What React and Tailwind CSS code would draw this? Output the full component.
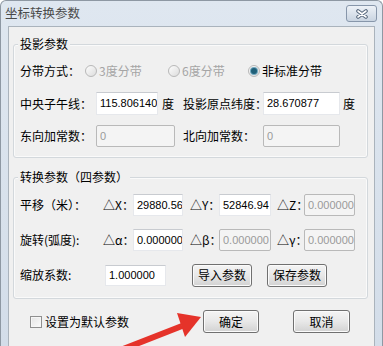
import React from 'react';

const cjk = { fontFamily: '"Noto Sans CJK SC", "Noto Sans", sans-serif' };

const Field = ({ value, w, disabled, h = 'h-[22px]' }) => (
  <div
    className={`${w} ${h} shrink-0 flex items-center px-[3px] overflow-hidden whitespace-nowrap text-[11px] font-['Liberation_Sans',sans-serif] ${
      disabled
        ? 'bg-[#f4f4f4] border border-[#b9b9b9] rounded-[2px] text-[#9a9a9a]'
        : 'bg-white border border-[#e6e8ec] border-t-[#c8cbd0] text-black'
    }`}
  >
    {value}
  </div>
);

const Radio = ({ checked, disabled, label, w }) => (
  <div className={`${w} shrink-0 flex items-center gap-[2px]`}>
    <div className="w-[12px] h-[12px] rounded-full border border-[#b8b8b8] bg-linear-to-br from-[#fdfdfd] to-[#dcdcdc] flex items-center justify-center">
      {checked && <div className="w-[6px] h-[6px] rounded-full bg-[#1f5f78] shadow-[0_0_0_1px_#6fa6bd]" />}
    </div>
    <span className={disabled ? 'text-[#a5a5a5]' : 'text-black'}>{label}</span>
  </div>
);

const Button = ({ children, w }) => (
  <div className={`${w} h-[23px] shrink-0 rounded-[3px] border border-[#707070] bg-linear-to-b from-[#f4f4f4] via-[#e8e8e8] to-[#d2d2d2] shadow-[inset_0_0_0_1px_#fbfbfb] flex items-center justify-center text-[12px] text-black`}>
    {children}
  </div>
);

const Delta = ({ children, w = 'w-[30px]' }) => (
  <span className={`${w} shrink-0 whitespace-nowrap`}>{children}</span>
);

const Group = ({ title, h, mt, children }) => (
  <div className={`relative w-[355px] ${h} ${mt} border border-[#d3d8dc] rounded-[3px] shadow-[inset_0_0_0_1px_#fafafa]`}>
    <span className="absolute left-[4px] top-[-9px] px-[2px] leading-[16px] bg-[#f0f0f0] text-[12px]">{title}</span>
    {children}
  </div>
);

export default function App() {
  return (
    <div
      className="relative w-[383px] h-[346px] overflow-hidden bg-linear-to-b from-[#dfe7f0] to-[#d3dde9] border-x border-t border-[#8e98a3] rounded-t-[6px] text-[12px] text-black"
      style={cjk}
    >
      {/* title bar */}
      <div className="h-[25px] flex items-center justify-between pl-[4px] pr-[5px]">
        <span className="text-[12.5px] text-[#4a4a4a]">坐标转换参数</span>
        <div className="w-[31px] h-[17px] rounded-[3px] border border-[#8796aa] bg-linear-to-b from-[#eef2f7] to-[#c9d4e1] flex items-center justify-center">
          <svg width="14" height="10" viewBox="0 0 14 10">
            <path d="M3 2 L11 8 M11 2 L3 8" stroke="#56677c" strokeWidth="3.6" strokeLinecap="round" />
            <path d="M3 2 L11 8 M11 2 L3 8" stroke="#ffffff" strokeWidth="1.6" strokeLinecap="round" />
          </svg>
        </div>
      </div>

      {/* client area */}
      <div className="ml-[7px] w-[367px] h-[321px] bg-[#f0f0f0] border-x border-t border-[#aab3bc] pl-[4px]">
        <Group title="投影参数" h="h-[114px]" mt="mt-[17px]">
          <div className="pt-[15px] pl-[6px] flex flex-col">
            <div className="h-[22px] flex items-center">
              <span className="w-[65px] shrink-0 whitespace-nowrap">分带方式：</span>
              <Radio w="w-[83px]" disabled label="3度分带" />
              <Radio w="w-[80px]" disabled label="6度分带" />
              <Radio w="w-[90px]" checked label="非标准分带" />
            </div>
            <div className="mt-[10px] h-[23px] flex items-center">
              <div className="w-[163px] shrink-0 flex items-center">
                <span className="w-[76px] shrink-0 whitespace-nowrap">中央子午线：</span>
                <Field w="w-[62px]" h="h-[23px]" value="115.806140" />
                <span className="ml-[4px]">度</span>
              </div>
              <span className="w-[80px] shrink-0 whitespace-nowrap">投影原点纬度：</span>
              <Field w="w-[77px]" h="h-[23px]" value="28.670877" />
              <span className="ml-[3px]">度</span>
            </div>
            <div className="mt-[10px] h-[22px] flex items-center">
              <div className="w-[163px] shrink-0 flex items-center">
                <span className="w-[76px] shrink-0 whitespace-nowrap">东向加常数：</span>
                <Field w="w-[79px]" disabled value="0" />
              </div>
              <span className="w-[80px] shrink-0 whitespace-nowrap">北向加常数：</span>
              <Field w="w-[77px]" disabled value="0" />
            </div>
          </div>
        </Group>

        <Group title="转换参数（四参数）" h="h-[122px]" mt="mt-[19px]">
          <div className="pt-[16px] pl-[6px] flex flex-col">
            <div className="h-[22px] flex items-center">
              <span className="w-[83px] shrink-0 whitespace-nowrap">平移（米）：</span>
              <Delta>△X：</Delta>
              <Field w="w-[50px]" value="29880.56" />
              <Delta w="w-[29px] ml-[7px]">△Y：</Delta>
              <Field w="w-[52px]" value="52846.94" />
              <Delta w="w-[27px] ml-[6px]">△Z：</Delta>
              <Field w="w-[51px]" disabled value="0.000000" />
            </div>
            <div className="mt-[13px] h-[22px] flex items-center">
              <span className="w-[83px] shrink-0 whitespace-nowrap">旋转(弧度):</span>
              <Delta>△α：</Delta>
              <Field w="w-[50px]" value="0.000000" />
              <Delta w="w-[29px] ml-[7px]">△β：</Delta>
              <Field w="w-[52px]" disabled value="0.000000" />
              <Delta w="w-[27px] ml-[6px]">△γ：</Delta>
              <Field w="w-[51px]" disabled value="0.000000" />
            </div>
            <div className="mt-[12px] h-[24px] flex items-center">
              <span className="w-[85px] shrink-0 whitespace-nowrap">缩放系数:</span>
              <Field w="w-[61px]" h="h-[21px]" value="1.000000" />
              <div className="ml-[26px]">
                <Button w="w-[60px]">导入参数</Button>
              </div>
              <div className="ml-[15px]">
                <Button w="w-[60px]">保存参数</Button>
              </div>
            </div>
          </div>
        </Group>

        <div className="mt-[11px] h-[23px] flex items-center">
          <div className="ml-[17px] w-[12px] h-[12px] border border-[#8f8f8f] bg-linear-to-br from-[#e4e4e4] to-[#fbfbfb] shadow-[inset_0_0_0_1px_#f6f6f6]" />
          <span className="ml-[3px]">设置为默认参数</span>
          <div className="ml-auto mr-[24px] flex items-center gap-[34px]">
            <Button w="w-[56px]">确定</Button>
            <Button w="w-[57px]">取消</Button>
          </div>
        </div>
      </div>

      {/* red annotation arrow */}
      <svg className="absolute left-0 top-0 pointer-events-none" width="383" height="346" viewBox="0 0 383 346">
        <path d="M112 352 L181 325" stroke="#e5332a" strokeWidth="6" strokeLinecap="butt" />
        <polygon points="200,316 176,312 184,336" fill="#e5332a" />
      </svg>
    </div>
  );
}
